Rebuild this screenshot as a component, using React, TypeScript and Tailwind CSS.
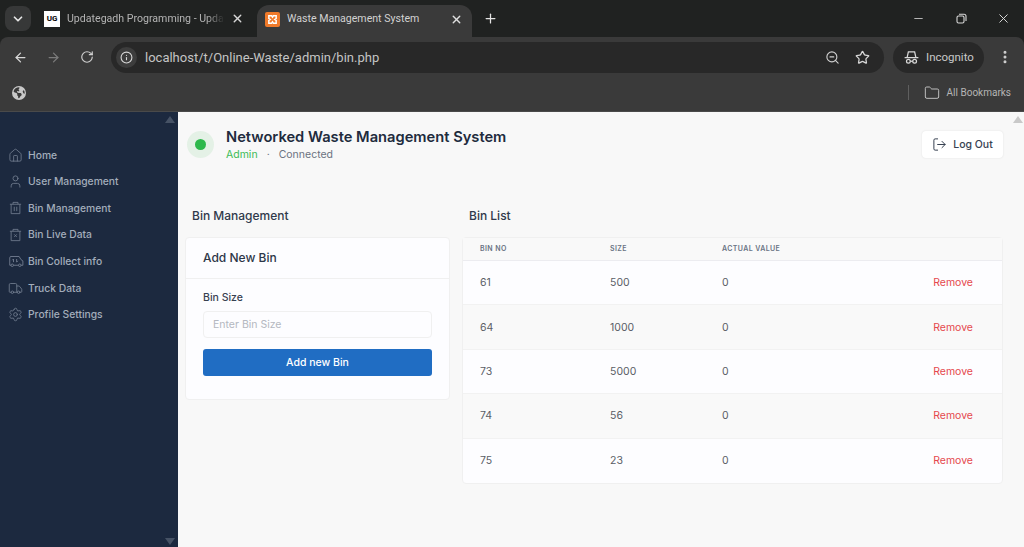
import { ArrowLeft, ArrowRight, RotateCw, Info, ZoomOut, Star, MoreVertical, Folder, X, Plus, ChevronDown, Minus, Home, User, Truck, Settings, LogOut } from "lucide-react"
import { FaEarthAmericas } from "react-icons/fa6"

const bins = [
  { no: 61, size: 500, value: 0 },
  { no: 64, size: 1000, value: 0 },
  { no: 73, size: 5000, value: 0 },
  { no: 74, size: 56, value: 0 },
  { no: 75, size: 23, value: 0 },
]

function BinX() {
  return (
    <svg width="15" height="16" viewBox="0 0 24 24" fill="none" stroke="currentColor" strokeWidth="1.4">
      <path d="M3 6h18M8 6V3h8v3M5 6v15h14V6M10 11l4 4M14 11l-4 4" />
    </svg>
  )
}

function BinLines() {
  return (
    <svg width="15" height="16" viewBox="0 0 24 24" fill="none" stroke="currentColor" strokeWidth="1.4">
      <path d="M3 6h18M8 6V3h8v3M5 6v15h14V6M10 10v7M14 10v7" />
    </svg>
  )
}

function Collect() {
  return (
    <svg width="16" height="15" viewBox="0 0 24 24" fill="none" stroke="currentColor" strokeWidth="1.5">
      <path d="M4 18H2V6a2 2 0 0 1 2-2h13l3 5 3 2v7h-3M8 18h8M8 8v5M8 8l-2 2M13 13V8M13 13l2-2" />
      <circle cx="6" cy="18" r="2" />
      <circle cx="18" cy="18" r="2" />
    </svg>
  )
}

const nav = [
  { label: "Home", icon: <Home size={15} strokeWidth={1.4} /> },
  { label: "User Management", icon: <User size={15} strokeWidth={1.4} /> },
  { label: "Bin Management", icon: <BinLines /> },
  { label: "Bin Live Data", icon: <BinX /> },
  { label: "Bin Collect info", icon: <Collect /> },
  { label: "Truck Data", icon: <Truck size={15} strokeWidth={1.4} /> },
  { label: "Profile Settings", icon: <Settings size={15} strokeWidth={1.4} /> },
]

function BrowserChrome() {
  return (
    <div className="bg-[#202221] font-['Roboto',sans-serif] text-[#c7c7c7]">
      {/* Tab strip */}
      <div className="flex h-[37px] items-end">
        <div className="mb-[6px] ml-[5px] flex h-[25px] w-[26px] items-center justify-center rounded-lg bg-[#373838]">
          <ChevronDown size={14} strokeWidth={3} className="text-[#e4e4e4]" />
        </div>
        <div className="flex h-[37px] w-[226px] items-center pl-[13px]">
          <div className="flex h-[16px] w-[16px] items-center justify-center bg-white text-[8px] leading-none font-bold text-black">UG</div>
          <span className="ml-[7px] w-[164px] overflow-hidden text-[10.600px] whitespace-nowrap text-[#b4b4b4] [mask-image:linear-gradient(to_right,black_85%,transparent_96%)]">Updategadh Programming - Upda</span>
          <X size={13} strokeWidth={2.5} className="text-[#d8d8d8]" />
        </div>
        <div className="flex h-[32px] w-[215px] items-center rounded-t-xl bg-[#3a3a3a] pb-[4px] pl-[8px]">
          <div className="flex h-[15px] w-[15px] items-center justify-center rounded-[2px] bg-[#f07a2a]">
            <svg width="11" height="11" viewBox="0 0 12 12" fill="none" stroke="white" strokeWidth="1.6">
              <path d="M2 2h3l1 1.500L7 2h3v3L8.500 6 10 7v3H7L6 8.500 5 10H2V7l1.500-1L2 5z" />
            </svg>
          </div>
          <span className="ml-[7px] w-[163px] text-[10.600px] whitespace-nowrap text-[#d2d2d2]">Waste Management System</span>
          <X size={13} strokeWidth={2.5} className="text-[#e0e0e0]" />
        </div>
        <Plus size={15} strokeWidth={2} className="mb-[11px] ml-[11px] text-[#e4e4e4]" />
        <div className="mb-[11px] ml-auto flex items-center">
          <Minus size={13} strokeWidth={1.5} className="mr-[31px] text-[#d8d8d8]" />
          <svg width="11" height="11" viewBox="0 0 11 11" fill="none" stroke="#d8d8d8" strokeWidth="1.100" className="mr-[29px]">
            <rect x="1" y="3" width="7" height="7" rx="1.500" />
            <path d="M3 1.200h5a2 2 0 0 1 2 2V8" />
          </svg>
          <X size={15} strokeWidth={1.5} className="mr-[13px] text-[#e0e0e0]" />
        </div>
      </div>
      {/* Toolbar */}
      <div className="flex h-[37px] items-start rounded-t-lg bg-[#3a3a3a] pt-[5px] pl-[13px]">
        <ArrowLeft size={15} strokeWidth={2} className="mt-[8px] text-[#d8d8d8]" />
        <ArrowRight size={15} strokeWidth={2} className="mt-[8px] ml-[18px] text-[#7b7b7b]" />
        <RotateCw size={14} strokeWidth={2} className="mt-[8px] ml-[19px] text-[#d0d0d0]" />
        <div className="ml-[17px] flex h-[31px] w-[773px] items-center rounded-full bg-[#282828] pl-[5px]">
          <div className="flex h-[21px] w-[21px] items-center justify-center rounded-full bg-[#3d3d3d]">
            <Info size={13} strokeWidth={2} className="text-[#d8d8d8]" />
          </div>
          <span className="ml-[8px] text-[13px] text-[#c4c4c4]">localhost/t/Online-Waste/admin/bin.php</span>
          <ZoomOut size={15} strokeWidth={1.8} className="ml-auto text-[#d0d0d0]" />
          <Star size={15} strokeWidth={2} className="mr-[14px] ml-[15px] text-[#d8d8d8]" />
        </div>
        <div className="ml-[9px] flex h-[31px] w-[91px] items-center rounded-full bg-[#282828] pl-[11px]">
          <svg width="15" height="15" viewBox="0 0 24 24" fill="none" stroke="#d8d8d8" strokeWidth="2">
            <path d="M1 12h22M5 12l2-9h10l2 9" />
            <circle cx="7" cy="18" r="3" />
            <circle cx="17" cy="18" r="3" />
            <path d="M10 18h4" />
          </svg>
          <span className="ml-[7px] text-[11.500px] text-[#c9c9c9]">Incognito</span>
        </div>
        <MoreVertical size={16} strokeWidth={2.5} className="mt-[7px] ml-[13px] text-[#d0d0d0]" />
      </div>
      {/* Bookmarks */}
      <div className="flex h-[38px] items-center border-b border-[#4a4a4a] bg-[#3a3a3a] pr-[13px] pl-[12px]">
        <FaEarthAmericas size={14} className="text-[#c8c8c8]" />
        <div className="ml-auto h-[15px] w-px bg-[#5f5f5f]" />
        <Folder size={16} strokeWidth={1.4} className="ml-[15px] text-[#c8c8c8]" />
        <span className="ml-[7px] text-[10px] text-[#b5b5b5]">All Bookmarks</span>
      </div>
    </div>
  )
}

function Sidebar() {
  return (
    <aside className="relative w-[178px] shrink-0 bg-[#1c293f] pt-[30px] font-['Inter',sans-serif]">
      <div className="absolute top-[4px] right-[3px] h-0 w-0 border-x-[5px] border-b-[7px] border-x-transparent border-b-[#465265]" />
      <div className="absolute right-[3px] bottom-[2px] h-0 w-0 border-x-[5px] border-t-[7px] border-x-transparent border-t-[#465265]" />
      {nav.map((item) => (
        <div key={item.label} className="flex h-[26.600px] items-center pl-[8px] text-[#a3adbb]">
          <span className="flex w-[20px] justify-start text-[#6f7a8d]">{item.icon}</span>
          <span className="text-[10.300px] font-medium">{item.label}</span>
        </div>
      ))}
    </aside>
  )
}

export default function App() {
  return (
    <div className="flex h-[547px] w-[1024px] flex-col overflow-hidden">
      <BrowserChrome />
      <div className="flex min-h-0 flex-1 bg-[#f8f8f8]">
        <Sidebar />
        <main className="relative flex-1 pt-[19px] pr-[21px] pl-[7px] font-['Inter',sans-serif]">
          <div className="absolute top-[4px] right-[1px] h-0 w-0 border-x-[5px] border-b-[7px] border-x-transparent border-b-[#c9c9c9]" />
          <header className="flex h-[27px] items-start pl-[2px]">
            <div className="flex h-[27px] w-[27px] items-center justify-center rounded-full bg-[#e4f1e6]">
              <div className="h-[11px] w-[11px] rounded-full bg-[#2eb84c]" />
            </div>
            <div className="-mt-[3px] ml-[12px]">
              <h1 className="text-[14.700px] leading-[18px] font-semibold text-[#212b3d]">Networked Waste Management System</h1>
              <p className="mt-[2px] text-[10.500px] leading-[14px] text-[#6b7280]">
                <span className="text-[#3dbb55]">Admin</span>
                <span className="mx-[9px]">·</span>
                Connected
              </p>
            </div>
            <button className="ml-auto flex h-[27px] w-[81px] items-center justify-center gap-[6px] rounded bg-white text-[10.500px] font-medium text-[#374151] shadow-[0_0_2px_rgba(0,0,0,0.1)]">
              <LogOut size={15} strokeWidth={1.6} />
              Log Out
            </button>
          </header>
          <div className="mt-[50px] grid grid-cols-[265px_541px] gap-x-[12px]">
            <section>
              <h2 className="h-[29px] pl-[7px] text-[12px] leading-[16px] font-medium text-[#303a4b]">Bin Management</h2>
              <div className="h-[163px] rounded border border-[#f0f0f0] bg-[#fdfdff]">
                <div className="flex h-[41px] items-center border-b border-[#f0f0f0] pl-[17px] text-[12px] font-medium text-[#2d3748]">Add New Bin</div>
                <div className="px-[17px] pt-[12px]">
                  <label className="block text-[10.500px] leading-[14px] font-medium text-[#374151]">Bin Size</label>
                  <input
                    placeholder="Enter Bin Size"
                    className="mt-[6px] h-[27px] w-full rounded border border-[#f0f0f0] bg-[#fdfdff] pl-[9px] text-[10.500px] placeholder:text-[#b4b8c0]"
                  />
                  <button className="mt-[11px] h-[27px] w-full rounded-[3px] bg-[#206dc3] text-[10.500px] font-medium text-white">Add new Bin</button>
                </div>
              </div>
            </section>
            <section>
              <h2 className="h-[29px] pl-[7px] text-[12px] leading-[16px] font-medium text-[#303a4b]">Bin List</h2>
              <div className="rounded border border-[#f0f0f0] bg-[#fdfdff]">
                <div className="grid h-[23px] grid-cols-[130px_112px_1fr] items-center border-b border-[#ececf0] bg-[#f9f9f9] pl-[17px] text-[7px] font-semibold tracking-[0.4px] text-[#697384]">
                  <span>BIN NO</span>
                  <span>SIZE</span>
                  <span>ACTUAL VALUE</span>
                </div>
                {bins.map((bin, i) => (
                  <div
                    key={bin.no}
                    className={`grid h-[44.400px] grid-cols-[130px_112px_1fr_auto] items-center border-b border-[#f2f2f2] pt-[1px] pr-[29px] pl-[17px] text-[10.500px] text-[#5a5d66] last:border-b-0 ${i % 2 === 1 ? "bg-[#f9f9f9]" : ""}`}
                  >
                    <span>{bin.no}</span>
                    <span>{bin.size}</span>
                    <span>{bin.value}</span>
                    <span className="text-[#e5484d]">Remove</span>
                  </div>
                ))}
              </div>
            </section>
          </div>
        </main>
      </div>
    </div>
  )
}
